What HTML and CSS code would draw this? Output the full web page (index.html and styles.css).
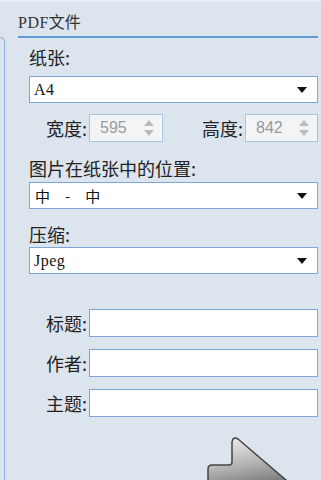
FILE: index.html
```html
<!DOCTYPE html>
<html lang="zh-CN">
<head>
  <meta charset="UTF-8">
  <meta name="viewport" content="width=device-width, initial-scale=1.0">
  <title>PDF文件</title>
  <link rel="stylesheet" href="styles.css">
</head>
<body>

  <div class="page">
    <div class="side-edge"></div>

    <div class="panel">
      <div class="panel-title"><span class="serif-title">PDF</span>文件</div>

      <div class="fields">
        <div class="label label-paper">纸张:</div>
        <div class="combo combo-paper">
          <span class="combo-text serif">A4</span>
          <span class="combo-arrow"></span>
        </div>

        <div class="size-row">
          <span class="row-label">宽度:</span>
          <div class="spin">
            <span class="spin-value">595</span>
            <span class="spin-btns"><i class="up"></i><i class="down"></i></span>
          </div>
          <span class="row-label">高度:</span>
          <div class="spin">
            <span class="spin-value">842</span>
            <span class="spin-btns"><i class="up"></i><i class="down"></i></span>
          </div>
        </div>

        <div class="label label-pos">图片在纸张中的位置:</div>
        <div class="combo combo-pos">
          <span class="combo-text cjk">中　-　中</span>
          <span class="combo-arrow"></span>
        </div>

        <div class="label label-zip">压缩:</div>
        <div class="combo combo-zip">
          <span class="combo-text serif">Jpeg</span>
          <span class="combo-arrow"></span>
        </div>

        <div class="info">
          <div class="info-row">
            <span class="row-label">标题:</span>
            <input type="text" class="info-input">
          </div>
          <div class="info-row">
            <span class="row-label">作者:</span>
            <input type="text" class="info-input">
          </div>
          <div class="info-row">
            <span class="row-label">主题:</span>
            <input type="text" class="info-input">
          </div>
        </div>
      </div>

      <div class="next">
        <svg width="100" height="60" viewBox="0 0 100 60">
          <defs>
            <linearGradient id="arrowFill" x1="0" y1="0" x2="0.3" y2="1">
              <stop offset="0" stop-color="#f4f4f4"/>
              <stop offset="0.5" stop-color="#b4b4b4"/>
              <stop offset="1" stop-color="#646464"/>
            </linearGradient>
          </defs>
          <path d="M1 60 L1 33 Q1 29 5 29 L22 29 Q25 29 25 26 L25 6 Q26 0 31 3 L100 62 Z"
                fill="url(#arrowFill)" stroke="#444" stroke-width="1.5" stroke-linejoin="round"/>
        </svg>
      </div>
    </div>
  </div>

</body>
</html>
```

FILE: styles.css
```css
html, body {
  margin: 0;
  padding: 0;
}
body {
  background: #dce4ee;
  font-family: "Noto Sans CJK SC", "Noto Sans", sans-serif;
  color: #222;
  width: 321px;
  height: 480px;
  overflow: hidden;
  border-top: 2px solid #e7edf4;
  box-sizing: border-box;
}
.page {
  display: flex;
  height: 478px;
}
.side-edge {
  width: 4px;
  margin-top: 35px;
  border-top: 1px solid #8fb0d8;
  border-right: 1px solid #8fb0d8;
  border-top-right-radius: 5px;
}
.panel {
  flex: 1;
  padding: 0 3px 0 13px;
}
.panel-title {
  height: 25px;
  padding-top: 9px;
  line-height: 20px;
  font-size: 16px;
  color: #333;
  border-bottom: 2px solid #5d9bd6;
}
.serif-title {
  font-family: "Liberation Serif", serif;
  font-size: 16px;
  letter-spacing: 0.5px;
}
.fields {
  padding-left: 11px;
}
.label {
  height: 20px;
  line-height: 20px;
  font-size: 18px;
}
.label-paper { margin-top: 9px; }
.label-pos { margin-top: 16px; }
.label-zip { margin-top: 15px; }

.combo {
  display: flex;
  align-items: center;
  justify-content: space-between;
  height: 25px;
  background: #fff;
  border: 1px solid #7fa5d4;
  padding: 0 10px 0 4px;
}
.combo-paper { margin-top: 9px; }
.combo-pos { margin-top: 4px; }
.combo-zip { margin-top: 3px; }
.combo-text {
  color: #111;
}
.serif {
  font-family: "Liberation Serif", serif;
  font-size: 16px;
  letter-spacing: 0.5px;
}
.cjk {
  font-size: 15px;
  padding-left: 1px;
}
.combo-arrow {
  width: 0;
  height: 0;
  border-left: 5px solid transparent;
  border-right: 5px solid transparent;
  border-top: 6px solid #111;
}

.size-row {
  display: grid;
  grid-template-columns: 58px 74px 78px 73px;
  column-gap: 2px;
  align-items: center;
  margin-top: 11px;
  height: 28px;
}
.row-label {
  text-align: right;
  font-size: 18px;
  line-height: 20px;
}
.spin {
  display: flex;
  align-items: center;
  justify-content: space-between;
  height: 26px;
  background: #f3f4f6;
  border: 1px solid #a9c3e3;
  padding: 0 8px 0 10px;
  font-family: "Liberation Sans", sans-serif;
  font-size: 16px;
  color: #9a9a9a;
}
.spin-btns {
  display: flex;
  flex-direction: column;
  gap: 4px;
}
.spin-btns i {
  width: 0;
  height: 0;
  border-left: 5px solid transparent;
  border-right: 5px solid transparent;
}
.spin-btns .up { border-bottom: 6px solid #b9b9b9; }
.spin-btns .down { border-top: 6px solid #b9b9b9; }

.info {
  margin-top: 35px;
  display: flex;
  flex-direction: column;
  gap: 12px;
}
.info-row {
  display: grid;
  grid-template-columns: 58px 1fr;
  column-gap: 2px;
  align-items: center;
}
.info-input {
  height: 28px;
  box-sizing: border-box;
  margin: 0;
  border: 1px solid #7fa5d4;
  background: #fff;
  padding: 0 4px;
  outline: none;
}
.next {
  margin-top: 19px;
  padding-left: 189px;
  height: 60px;
}
.next svg {
  display: block;
}
```
